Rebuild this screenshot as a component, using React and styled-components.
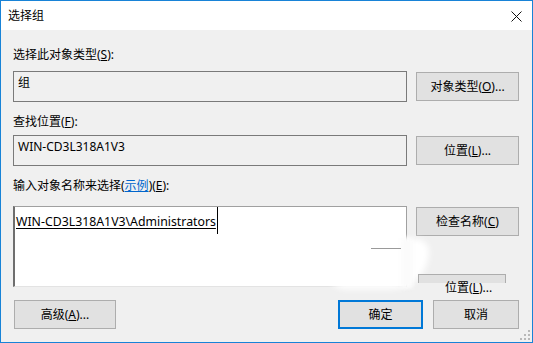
import styled, { createGlobalStyle } from "styled-components";

const GlobalStyle = createGlobalStyle`
  html, body {
    margin: 0;
    padding: 0;
    background: #f0f0f0;
  }
  body {
    font-family: "Noto Sans", "Noto Sans CJK SC", sans-serif;
    font-size: 12px;
    color: #000;
  }
`;

export default function App() {
  return (
    <>
      <GlobalStyle />
      <Window>
        <TitleBar>
          <Title>选择组</Title>
          <CloseButton>
            <svg width="11" height="11" viewBox="0 0 11 11">
              <path d="M0.5 0.5L10.5 10.5M10.5 0.5L0.5 10.5" stroke="#111" strokeWidth="1" />
            </svg>
          </CloseButton>
        </TitleBar>
        <Body>
          <Label $top={0} $bottom={8}>
            选择此对象类型(<u>S</u>):
          </Label>
          <Row>
            <Field>组</Field>
            <Button>
              对象类型(<u>O</u>)...
            </Button>
          </Row>

          <Label $top={11} $bottom={5}>
            查找位置(<u>F</u>):
          </Label>
          <Row>
            <Field>WIN-CD3L318A1V3</Field>
            <Button>
              位置(<u>L</u>)...
            </Button>
          </Row>

          <Label $top={11} $bottom={12}>
            输入对象名称来选择(<Link>示例</Link>)(<u>E</u>):
          </Label>
          <Row $align="flex-start">
            <TextArea>
              <Entry>WIN-CD3L318A1V3\Administrators</Entry>
              <Caret />
            </TextArea>
            <Button $offset={1}>
              检查名称(<u>C</u>)
            </Button>
          </Row>

          <Footer>
            <Button $width={102}>
              高级(<u>A</u>)...
            </Button>
            <Actions>
              <Button $width={85} $primary>
                确定
              </Button>
              <Button $width={86}>取消</Button>
            </Actions>
          </Footer>
        </Body>

        <Smudge />
        <SmudgeEdge />
        <SmudgeLine />
        <GhostButton />
        <GhostLabel>
          位置(<u>L</u>)...
        </GhostLabel>
        <Grip>
          <svg width="10" height="10" viewBox="0 0 10 10">
            <g fill="#b8b8b8">
              <rect x="8" y="0" width="2" height="2" />
              <rect x="4" y="4" width="2" height="2" />
              <rect x="8" y="4" width="2" height="2" />
              <rect x="0" y="8" width="2" height="2" />
              <rect x="4" y="8" width="2" height="2" />
              <rect x="8" y="8" width="2" height="2" />
            </g>
          </svg>
        </Grip>
      </Window>
    </>
  );
}

const Window = styled.div`
  position: relative;
  width: 533px;
  height: 343px;
  box-sizing: border-box;
  border: 1px solid #1883d7;
  background: #f0f0f0;
  display: flex;
  flex-direction: column;
  overflow: hidden;
`;

const TitleBar = styled.div`
  height: 29px;
  background: #fff;
  display: flex;
  align-items: center;
  justify-content: space-between;
  padding: 0 10px 0 7px;
`;

const Title = styled.div`
  font-size: 12px;
  line-height: 16px;
  margin-top: 1px;
`;

const CloseButton = styled.div`
  display: flex;
  align-items: center;
  margin-top: 1px;
`;

const Body = styled.div`
  display: flex;
  flex-direction: column;
  padding: 16px 13px 0 12px;
`;

const Label = styled.div`
  height: 17px;
  line-height: 17px;
  margin-top: ${(p) => p.$top}px;
  margin-bottom: ${(p) => p.$bottom}px;
`;

const Link = styled.span`
  color: #0066cc;
  text-decoration: underline;
`;

const Row = styled.div`
  display: flex;
  align-items: ${(p) => p.$align || "center"};
  gap: 9px;
`;

const Field = styled.div`
  width: 394px;
  height: 31px;
  box-sizing: border-box;
  border: 1px solid #7a7a7a;
  padding: 3px 4px 0;
  line-height: 16px;
  background: #f0f0f0;
`;

const TextArea = styled.div`
  width: 394px;
  height: 81px;
  box-sizing: border-box;
  background: #fff;
  border-top: 1px solid #a0a0a0;
  border-left: 2px solid #6e6e6e;
  border-right: 1px solid #a0a0a0;
  border-bottom: 1px solid #e3e3e3;
  padding: 7px 0 0 1px;
  line-height: 16px;
  display: flex;
  align-items: flex-start;
`;

const Entry = styled.span`
  font-size: 12.3px;
  text-decoration: underline;
  text-underline-offset: 2px;
`;

const Caret = styled.span`
  width: 1px;
  height: 27px;
  margin-top: -7px;
  margin-left: 1px;
  background: #000;
`;

const Button = styled.div`
  width: ${(p) => p.$width || 103}px;
  height: 29px;
  margin-top: ${(p) => p.$offset || 0}px;
  box-sizing: border-box;
  border: ${(p) => (p.$primary ? "2px solid #0078d7" : "1px solid #adadad")};
  background: #e1e1e1;
  display: flex;
  align-items: center;
  justify-content: center;
  line-height: 16px;
  flex-shrink: 0;
`;

const Footer = styled.div`
  display: flex;
  justify-content: space-between;
  margin-top: 13px;
  padding-left: 1px;
`;

const Actions = styled.div`
  display: flex;
  gap: 10px;
`;

const Smudge = styled.div`
  position: absolute;
  left: 326px;
  top: 238px;
  width: 102px;
  height: 50px;
  background: #fff;
  border-radius: 30px 14px 40px 20px;
  filter: blur(3px);
`;

const SmudgeEdge = styled.div`
  position: absolute;
  left: 400px;
  top: 237px;
  width: 12px;
  height: 50px;
  background: #fbfbfb;
  filter: blur(2px);
`;

const SmudgeLine = styled.div`
  position: absolute;
  left: 370px;
  top: 247px;
  width: 30px;
  height: 1px;
  background: #9a9a9a;
  filter: blur(0.6px);
`;

const GhostButton = styled.div`
  position: absolute;
  left: 417px;
  top: 273px;
  width: 88px;
  height: 9px;
  box-sizing: border-box;
  background: #e1e1e1;
  border: 1px solid #adadad;
  border-bottom: none;
`;

const GhostLabel = styled.div`
  position: absolute;
  left: 444px;
  top: 279px;
  line-height: 16px;
`;

const Grip = styled.div`
  position: absolute;
  right: 2px;
  bottom: 2px;
  display: flex;
`;
